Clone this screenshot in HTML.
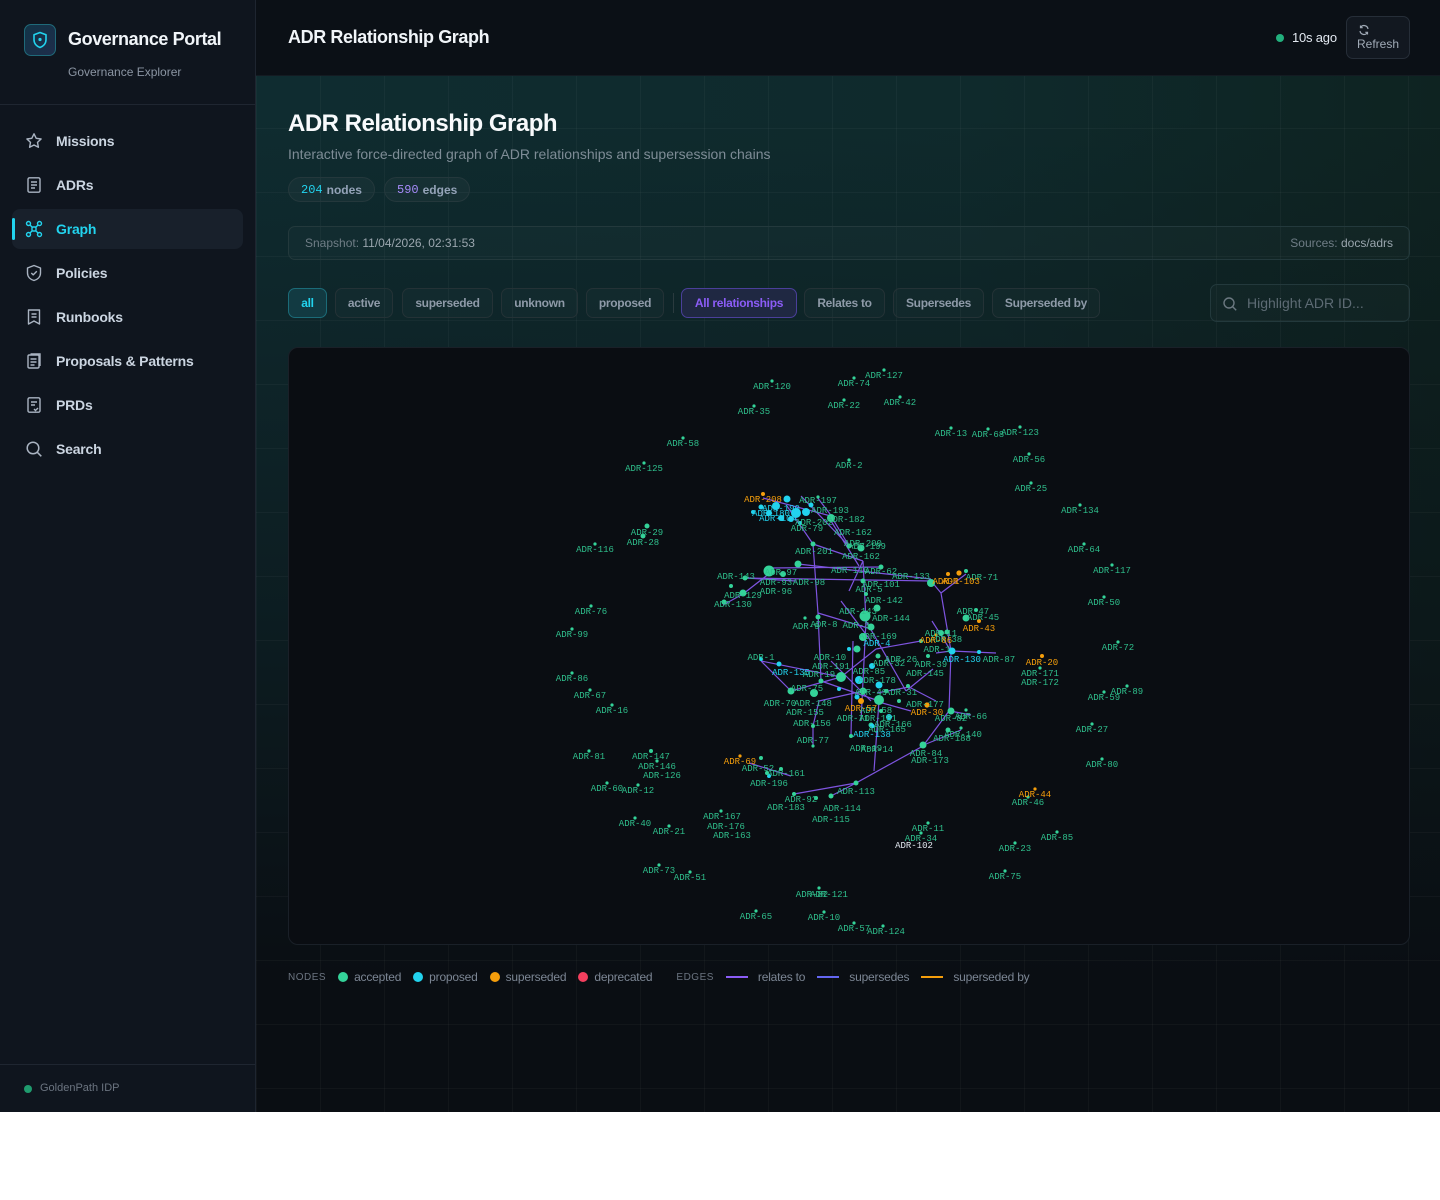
<!DOCTYPE html>
<html><head><meta charset="utf-8">
<style>
*{box-sizing:border-box;margin:0;padding:0}
body{width:1440px;height:1200px;background:#fff;font-family:"Liberation Sans",sans-serif;position:relative;overflow:hidden}
.side{position:absolute;left:0;top:0;width:256px;height:1112px;background:#0f151e;border-right:1px solid #1e2530}
.logo{position:absolute;left:24px;top:24px;width:32px;height:32px;border-radius:7px;border:1px solid #1f6a7a;background:linear-gradient(135deg,#123447,#1e2d4a)}
.brand{position:absolute;left:68px;top:29px;color:#f1f5f9;font-size:18px;font-weight:700;letter-spacing:-0.4px}
.sub{position:absolute;left:68px;top:65px;color:#8b95a3;font-size:12px}
.div1{position:absolute;left:0;top:104px;width:255px;height:1px;background:#1f2631}
.nav{position:absolute;left:12px;width:231px;height:40px;display:flex;align-items:center;padding-left:44px;color:#cbd5e1;font-size:14px;font-weight:700;letter-spacing:-0.2px}
.nav svg{position:absolute;left:13px;top:11px}
.nav.act{background:#18202b;border-radius:8px;color:#22d3ee}
.nav.act:before{content:"";position:absolute;left:0;top:9px;width:3px;height:22px;background:#22d3ee;border-radius:2px}
.foot{position:absolute;left:0;top:1064px;width:255px;height:1px;background:#1f2631}
.main{position:absolute;left:256px;top:0;width:1184px;height:1112px;background:
linear-gradient(180deg,rgba(10,14,19,0) 0%,rgba(10,14,19,0) 10%,rgba(10,14,19,.5) 55%,rgba(10,14,19,1) 88%),
linear-gradient(90deg,#0f2c30 0%,#0f2a2c 60%,#0e2321 100%)}
.grid{position:absolute;inset:0;background-image:linear-gradient(rgba(255,255,255,.03) 1px,transparent 1px),linear-gradient(90deg,rgba(255,255,255,.03) 1px,transparent 1px);background-size:64px 64px;background-position:0 0}
.hdr{position:absolute;left:0;top:0;width:1184px;height:76px;background:#0b1016;border-bottom:1px solid #141b22}
.t1{position:absolute;left:32px;top:27px;color:#f1f5f9;font-size:18px;font-weight:700;letter-spacing:-0.4px}
.pill{position:absolute;top:177px;height:25px;border:1px solid #24383c;border-radius:13px;background:rgba(255,255,255,.03);color:#94a3b8;font-size:12px;font-weight:700;display:flex;align-items:center;padding:0 12px}
.mono{font-family:"Liberation Mono",monospace;font-weight:400}
.btn{position:absolute;top:288px;height:30px;border:1px solid #243236;border-radius:7px;background:rgba(255,255,255,.02);color:#8e9aa8;font-size:12px;font-weight:700;display:flex;align-items:center;justify-content:center;letter-spacing:-0.3px}
.lg{position:absolute;top:970px;font-size:12px;color:#7c8694;display:flex;align-items:center;letter-spacing:-0.2px}
.dot{width:10px;height:10px;border-radius:50%;margin-right:6px}
.ln{width:22px;height:2px;margin-right:10px}
svg text{font-family:"Liberation Mono",monospace;font-size:9px}
</style></head><body>
<div class="side">
 <div class="logo"><svg width="32" height="32" viewBox="0 0 32 32" style="position:absolute;left:-1px;top:-1px"><path d="M16 8.5l6 2.3v5c0 3.8-2.6 6.5-6 7.7-3.4-1.2-6-3.9-6-7.7v-5z" fill="none" stroke="#22d3ee" stroke-width="1.6" stroke-linejoin="round"/><circle cx="16" cy="15.5" r="1.6" fill="#22d3ee"/></svg></div>
 <div class="brand">Governance Portal</div>
 <div class="sub">Governance Explorer</div>
 <div class="div1"></div>
 <div class="nav" style="top:121px"><svg width="18" height="18" viewBox="0 0 18 18" fill="none" stroke="#aab4c2" stroke-width="1.4" stroke-linejoin="round"><path d="M9 1.8l2.2 4.5 4.9.7-3.6 3.4.9 4.9L9 13l-4.4 2.3.9-4.9L1.9 7l4.9-.7z"/></svg>Missions</div>
 <div class="nav" style="top:165px"><svg width="18" height="18" viewBox="0 0 18 18" fill="none" stroke="#aab4c2" stroke-width="1.4"><rect x="3" y="1.8" width="12" height="14.4" rx="1.5"/><path d="M6 6h6M6 9h6M6 12h4"/></svg>ADRs</div>
 <div class="nav act" style="top:209px"><svg width="18" height="18" viewBox="0 0 18 18" fill="none" stroke="#22d3ee" stroke-width="1.4"><circle cx="3.5" cy="3.5" r="2"/><circle cx="14.5" cy="3.5" r="2"/><circle cx="3.5" cy="14.5" r="2"/><circle cx="14.5" cy="14.5" r="2"/><rect x="7" y="7" width="4" height="4" rx="1"/><path d="M5 5l2 2M13 5l-2 2M5 13l2-2M13 13l-2-2"/></svg>Graph</div>
 <div class="nav" style="top:253px"><svg width="18" height="18" viewBox="0 0 18 18" fill="none" stroke="#aab4c2" stroke-width="1.4" stroke-linejoin="round"><path d="M9 1.5l6.5 2.5v5c0 4-3 6.5-6.5 7.5C5.5 15.5 2.5 13 2.5 9V4z"/><path d="M6.3 9l1.9 1.9 3.6-3.6"/></svg>Policies</div>
 <div class="nav" style="top:297px"><svg width="18" height="18" viewBox="0 0 18 18" fill="none" stroke="#aab4c2" stroke-width="1.4" stroke-linejoin="round"><path d="M3.5 2h11v14l-5.5-3-5.5 3z"/><path d="M6.5 6h5M6.5 9h5"/></svg>Runbooks</div>
 <div class="nav" style="top:341px"><svg width="18" height="18" viewBox="0 0 18 18" fill="none" stroke="#aab4c2" stroke-width="1.4"><rect x="3" y="3" width="11" height="13" rx="1.2"/><path d="M5.5 2h9.5v12"/><path d="M5.5 7h6M5.5 10h6M5.5 13h4"/></svg>Proposals &amp; Patterns</div>
 <div class="nav" style="top:385px"><svg width="18" height="18" viewBox="0 0 18 18" fill="none" stroke="#aab4c2" stroke-width="1.4"><rect x="3" y="1.8" width="12" height="14.4" rx="1.5"/><path d="M6 6h6M6 9h4M9 13l1.5 1.5L13 12"/></svg>PRDs</div>
 <div class="nav" style="top:429px"><svg width="18" height="18" viewBox="0 0 18 18" fill="none" stroke="#aab4c2" stroke-width="1.5"><circle cx="8" cy="8" r="5.8"/><path d="M12.3 12.3l4 4"/></svg>Search</div>
 <div class="foot"></div>
 <div style="position:absolute;left:24px;top:1085px;width:8px;height:8px;border-radius:50%;background:#1f9b6e"></div>
 <div style="position:absolute;left:40px;top:1082px;font-size:11px;color:#6b7480">GoldenPath IDP</div>
</div>
<div class="main">
 <div class="grid"></div>
 <div class="hdr">
  <div class="t1">ADR Relationship Graph</div>
  <div style="position:absolute;left:1020px;top:34px;width:8px;height:8px;border-radius:50%;background:#22b07d"></div>
  <div style="position:absolute;left:1036px;top:30px;color:#e2e8f0;font-size:13px;letter-spacing:-0.2px">10s ago</div>
  <div style="position:absolute;left:1090px;top:16px;width:64px;height:43px;border:1px solid #262e38;border-radius:7px;background:#121820;color:#a0aab6;font-size:12px">
   <svg width="12" height="12" viewBox="0 0 12 12" style="position:absolute;left:11px;top:7px" fill="none" stroke="#a0aab6" stroke-width="1.2"><path d="M10 5A4 4 0 0 0 2.6 3.5M2 7a4 4 0 0 0 7.4 1.5"/><path d="M2.5 1.5v2.2h2.2M9.5 10.5V8.3H7.3"/></svg>
   <div style="position:absolute;left:10px;top:20px">Refresh</div></div>
 </div>
 <div style="position:absolute;left:32px;top:110px;color:#f8fafc;font-size:24px;font-weight:700;letter-spacing:-0.5px">ADR Relationship Graph</div>
 <div style="position:absolute;left:32px;top:146px;color:#7e8c96;font-size:14px">Interactive force-directed graph of ADR relationships and supersession chains</div>
 <div class="pill" style="left:32px"><span class="mono" style="color:#22d3ee;margin-right:4px">204</span>nodes</div>
 <div class="pill" style="left:128px"><span class="mono" style="color:#a78bfa;margin-right:4px">590</span>edges</div>
 <div style="position:absolute;left:32px;top:226px;width:1122px;height:34px;border:1px solid #23393c;border-radius:7px;background:rgba(255,255,255,.02);font-size:12px;color:#6f7d86">
  <span style="position:absolute;left:16px;top:9px">Snapshot: <span style="color:#9aa6ae">11/04/2026, 02:31:53</span></span>
  <span style="position:absolute;right:16px;top:9px">Sources: <span style="color:#9aa6ae">docs/adrs</span></span></div>
 <div class="btn" style="left:32px;width:39px;border-color:#1b6b78;background:#123a42;color:#22d3ee">all</div>
 <div class="btn" style="left:79px;width:58px">active</div>
 <div class="btn" style="left:146px;width:91px">superseded</div>
 <div class="btn" style="left:245px;width:77px">unknown</div>
 <div class="btn" style="left:330px;width:78px">proposed</div>
 <div style="position:absolute;left:417px;top:293px;width:1px;height:20px;background:#2a3a3e"></div>
 <div class="btn" style="left:425px;width:116px;border-color:#4a3f9a;background:#1f2842;color:#8b5cf6">All relationships</div>
 <div class="btn" style="left:548px;width:81px">Relates to</div>
 <div class="btn" style="left:637px;width:91px">Supersedes</div>
 <div class="btn" style="left:736px;width:108px">Superseded by</div>
 <div style="position:absolute;left:954px;top:284px;width:200px;height:38px;border:1px solid #23393c;border-radius:7px;background:rgba(255,255,255,.02);color:#5d6b74;font-size:14px">
  <svg width="16" height="16" viewBox="0 0 16 16" style="position:absolute;left:11px;top:11px" fill="none" stroke="#6b7880" stroke-width="1.4"><circle cx="7" cy="7" r="5"/><path d="M10.7 10.7l3.5 3.5"/></svg>
  <span style="position:absolute;left:36px;top:10px">Highlight ADR ID...</span></div>
 <div style="position:absolute;left:32px;top:347px;width:1122px;height:598px;border:1px solid #1a2028;border-radius:10px;background:#0a0d12;overflow:hidden">
<svg width="1122" height="598" viewBox="288 347 1122 598">
<g stroke="#8b5cf6" stroke-width="1.2" fill="none" opacity=".9">
<path d="M762 497L830 515 848 545M786 505L812 543 817 612 820 680M812 543L862 560M744 577L930 580M768 567L880 566M797 563L930 578M930 580L940 592 950 650 948 710 922 745 855 782 793 793M862 560L865 620 860 720M840 676L760 660M820 680L878 700M876 692L908 686M950 650L995 652M908 686L935 700M800 495L848 545M830 520L858 565M790 690L840 676M878 700L873 770M817 612L870 628M862 560L848 590M865 620L905 690M760 660L790 690M816 496L832 517M840 676L875 648M875 648L920 640M935 652L950 650M874 700L910 710M949 710L970 714M920 745L960 729M769 572L742 593M742 593L722 604M795 580L744 577M862 690L818 700M818 700L812 725 812 745M748 762L790 775M855 782L830 795M870 640L840 600M830 660L870 700M905 690L932 668M852 640L850 735M940 592L965 573M931 620L950 650"/>
</g>
<g fill="#34d399">
<circle cx="771" cy="380" r="1.6"/><circle cx="853" cy="377" r="1.6"/><circle cx="883" cy="369" r="1.6"/><circle cx="843" cy="399" r="1.6"/><circle cx="899" cy="396" r="1.6"/><circle cx="753" cy="405" r="1.6"/><circle cx="950" cy="427" r="1.6"/><circle cx="987" cy="428" r="1.6"/><circle cx="1019" cy="426" r="1.6"/><circle cx="682" cy="437" r="1.6"/><circle cx="1028" cy="453" r="1.6"/><circle cx="848" cy="459" r="1.6"/><circle cx="643" cy="462" r="1.6"/><circle cx="1030" cy="482" r="1.6"/><circle cx="1079" cy="504" r="1.6"/><circle cx="646" cy="525" r="2.5"/><circle cx="642" cy="535" r="2.5"/><circle cx="594" cy="543" r="1.6"/><circle cx="1083" cy="543" r="1.6"/><circle cx="1111" cy="564" r="1.6"/><circle cx="1103" cy="596" r="1.6"/><circle cx="590" cy="605" r="1.6"/><circle cx="571" cy="628" r="1.6"/><circle cx="1117" cy="641" r="1.6"/><circle cx="1039" cy="667" r="1.6"/><circle cx="571" cy="672" r="1.6"/><circle cx="1126" cy="685" r="1.6"/><circle cx="1103" cy="691" r="1.6"/><circle cx="589" cy="689" r="1.6"/><circle cx="611" cy="704" r="1.6"/><circle cx="1091" cy="723" r="1.6"/><circle cx="588" cy="750" r="1.6"/><circle cx="650" cy="750" r="2"/><circle cx="656" cy="760" r="1.6"/><circle cx="1101" cy="758" r="1.6"/><circle cx="606" cy="782" r="1.6"/><circle cx="637" cy="784" r="1.6"/><circle cx="1027" cy="796" r="1.6"/><circle cx="634" cy="817" r="1.6"/><circle cx="668" cy="825" r="1.6"/><circle cx="927" cy="822" r="1.6"/><circle cx="1056" cy="831" r="1.6"/><circle cx="920" cy="832" r="1.6"/><circle cx="1014" cy="842" r="1.6"/><circle cx="658" cy="864" r="1.6"/><circle cx="689" cy="871" r="1.6"/><circle cx="1004" cy="870" r="1.6"/><circle cx="818" cy="887" r="1.6"/><circle cx="755" cy="910" r="1.6"/><circle cx="823" cy="911" r="1.6"/><circle cx="853" cy="922" r="1.6"/><circle cx="882" cy="925" r="1.6"/>
<circle cx="812" cy="543" r="2.5"/><circle cx="830" cy="517" r="4"/><circle cx="848" cy="545" r="2.5"/><circle cx="860" cy="547" r="3.5"/><circle cx="768" cy="570" r="5.5"/><circle cx="797" cy="563" r="3.5"/><circle cx="744" cy="577" r="2.5"/><circle cx="782" cy="573" r="3"/><circle cx="742" cy="592" r="3.5"/><circle cx="723" cy="601" r="2.5"/><circle cx="730" cy="585" r="2"/><circle cx="880" cy="566" r="2.5"/><circle cx="930" cy="582" r="4"/><circle cx="965" cy="570" r="2"/><circle cx="862" cy="580" r="2.5"/><circle cx="865" cy="593" r="2"/><circle cx="876" cy="607" r="3.5"/><circle cx="864" cy="615" r="5.5"/><circle cx="870" cy="626" r="3.5"/><circle cx="862" cy="636" r="4"/><circle cx="856" cy="648" r="3.5"/><circle cx="817" cy="616" r="2.5"/><circle cx="804" cy="617" r="1.6"/><circle cx="946" cy="631" r="2.5"/><circle cx="965" cy="617" r="3.5"/><circle cx="975" cy="609" r="2"/><circle cx="940" cy="632" r="3"/><circle cx="927" cy="655" r="2"/><circle cx="920" cy="640" r="2"/><circle cx="877" cy="655" r="2.5"/><circle cx="907" cy="685" r="2"/><circle cx="878" cy="699" r="5"/><circle cx="840" cy="676" r="5"/><circle cx="862" cy="690" r="3.5"/><circle cx="790" cy="690" r="3.5"/><circle cx="813" cy="692" r="4"/><circle cx="820" cy="680" r="2.5"/><circle cx="812" cy="725" r="2"/><circle cx="812" cy="745" r="1.6"/><circle cx="950" cy="710" r="3.5"/><circle cx="965" cy="709" r="1.6"/><circle cx="947" cy="729" r="2.5"/><circle cx="960" cy="727" r="1.6"/><circle cx="922" cy="744" r="3.5"/><circle cx="855" cy="782" r="2.5"/><circle cx="870" cy="724" r="2.5"/><circle cx="793" cy="793" r="2"/><circle cx="830" cy="795" r="2.5"/><circle cx="815" cy="797" r="2"/><circle cx="760" cy="757" r="2"/><circle cx="780" cy="768" r="2"/><circle cx="766" cy="772" r="2"/><circle cx="720" cy="810" r="1.6"/><circle cx="885" cy="690" r="2"/><circle cx="898" cy="700" r="2"/><circle cx="850" cy="735" r="2"/><circle cx="880" cy="710" r="2"/><circle cx="817" cy="496" r="1.6"/>
</g>
<g fill="#22d3ee">
<circle cx="786" cy="498" r="3.5"/><circle cx="775" cy="505" r="4"/><circle cx="795" cy="512" r="5"/><circle cx="805" cy="511" r="4"/><circle cx="768" cy="512" r="3"/><circle cx="810" cy="504" r="2.5"/><circle cx="790" cy="518" r="3"/><circle cx="760" cy="506" r="2.5"/><circle cx="780" cy="517" r="3"/><circle cx="799" cy="522" r="2"/><circle cx="752" cy="511" r="2"/><circle cx="951" cy="650" r="3.5"/><circle cx="978" cy="651" r="2"/><circle cx="878" cy="684" r="3.5"/><circle cx="858" cy="679" r="4"/><circle cx="871" cy="665" r="3"/><circle cx="778" cy="663" r="2.5"/><circle cx="760" cy="658" r="2"/><circle cx="848" cy="648" r="2"/><circle cx="888" cy="716" r="3"/><circle cx="871" cy="725" r="2.5"/><circle cx="856" cy="696" r="2.5"/><circle cx="768" cy="775" r="2"/><circle cx="838" cy="688" r="2"/></g>
<g fill="#f59e0b"><circle cx="762" cy="493" r="2"/><circle cx="1041" cy="655" r="2"/><circle cx="1034" cy="788" r="1.6"/><circle cx="947" cy="573" r="2"/><circle cx="958" cy="572" r="2.6"/><circle cx="978" cy="620" r="2"/><circle cx="935" cy="634" r="1.6"/><circle cx="860" cy="700" r="3"/><circle cx="926" cy="704" r="2.6"/><circle cx="739" cy="755" r="1.6"/></g>
<g fill="#2fbf8c" text-anchor="middle">
<text x="771" y="388">ADR-120</text><text x="853" y="385">ADR-74</text><text x="883" y="377">ADR-127</text><text x="843" y="407">ADR-22</text><text x="899" y="404">ADR-42</text><text x="753" y="413">ADR-35</text><text x="950" y="435">ADR-13</text><text x="987" y="436">ADR-68</text><text x="1019" y="434">ADR-123</text><text x="682" y="445">ADR-58</text><text x="1028" y="461">ADR-56</text><text x="848" y="467">ADR-2</text><text x="643" y="470">ADR-125</text><text x="1030" y="490">ADR-25</text><text x="1079" y="512">ADR-134</text><text x="646" y="534">ADR-29</text><text x="642" y="544">ADR-28</text><text x="594" y="551">ADR-116</text><text x="1083" y="551">ADR-64</text><text x="1111" y="572">ADR-117</text><text x="1103" y="604">ADR-50</text><text x="590" y="613">ADR-76</text><text x="571" y="636">ADR-99</text><text x="1117" y="649">ADR-72</text><text x="1039" y="675">ADR-171</text><text x="1039" y="684">ADR-172</text><text x="571" y="680">ADR-86</text><text x="1126" y="693">ADR-89</text><text x="1103" y="699">ADR-59</text><text x="589" y="697">ADR-67</text><text x="611" y="712">ADR-16</text><text x="1091" y="731">ADR-27</text><text x="588" y="758">ADR-81</text><text x="650" y="758">ADR-147</text><text x="656" y="768">ADR-146</text><text x="661" y="777">ADR-126</text><text x="1101" y="766">ADR-80</text><text x="606" y="790">ADR-60</text><text x="637" y="792">ADR-12</text><text x="1027" y="804">ADR-46</text><text x="634" y="825">ADR-40</text><text x="668" y="833">ADR-21</text><text x="927" y="830">ADR-11</text><text x="1056" y="839">ADR-85</text><text x="920" y="840">ADR-34</text><text x="1014" y="850">ADR-23</text><text x="658" y="872">ADR-73</text><text x="689" y="879">ADR-51</text><text x="1004" y="878">ADR-75</text><text x="811" y="896">ADR-82</text><text x="828" y="896">ADR-121</text><text x="755" y="918">ADR-65</text><text x="823" y="919">ADR-10</text><text x="853" y="930">ADR-57</text><text x="885" y="933">ADR-124</text>
<text x="817" y="502">ADR-197</text><text x="829" y="512">ADR-193</text><text x="845" y="521">ADR-182</text><text x="806" y="530">ADR-79</text><text x="813" y="524">ADR-202</text><text x="852" y="534">ADR-162</text><text x="866" y="548">ADR-199</text><text x="862" y="545">ADR-200</text><text x="813" y="553">ADR-201</text><text x="860" y="558">ADR-162</text><text x="849" y="572">ADR-110</text><text x="880" y="573">ADR-62</text><text x="910" y="578">ADR-133</text><text x="981" y="579">ADR-71</text><text x="780" y="574">ADR-97</text><text x="808" y="584">ADR-98</text><text x="775" y="593">ADR-96</text><text x="775" y="584">ADR-93</text><text x="742" y="597">ADR-129</text><text x="732" y="606">ADR-130</text><text x="735" y="578">ADR-143</text><text x="880" y="586">ADR-101</text><text x="868" y="591">ADR-5</text><text x="883" y="602">ADR-142</text><text x="890" y="620">ADR-144</text><text x="857" y="613">ADR-143</text><text x="805" y="628">ADR-9</text><text x="823" y="626">ADR-8</text><text x="855" y="627">ADR-3</text><text x="877" y="638">ADR-169</text><text x="945" y="641">ADR-38</text><text x="982" y="619">ADR-45</text><text x="972" y="613">ADR-47</text><text x="940" y="635">ADR-11</text><text x="900" y="661">ADR-26</text><text x="888" y="665">ADR-32</text><text x="924" y="675">ADR-145</text><text x="930" y="666">ADR-39</text><text x="998" y="661">ADR-87</text><text x="868" y="673">ADR-85</text><text x="876" y="682">ADR-178</text><text x="829" y="659">ADR-10</text><text x="760" y="659">ADR-1</text><text x="818" y="676">ADR-19</text><text x="812" y="705">ADR-148</text><text x="779" y="705">ADR-70</text><text x="804" y="714">ADR-155</text><text x="811" y="725">ADR-156</text><text x="812" y="742">ADR-77</text><text x="924" y="706">ADR-177</text><text x="970" y="718">ADR-66</text><text x="950" y="720">ADR-82</text><text x="962" y="736">ADR-140</text><text x="951" y="740">ADR-188</text><text x="886" y="731">ADR-165</text><text x="892" y="726">ADR-166</text><text x="876" y="751">ADR-14</text><text x="865" y="750">ADR-19</text><text x="925" y="755">ADR-84</text><text x="929" y="762">ADR-173</text><text x="785" y="775">ADR-161</text><text x="757" y="770">ADR-52</text><text x="768" y="785">ADR-196</text><text x="855" y="793">ADR-113</text><text x="841" y="810">ADR-114</text><text x="785" y="809">ADR-183</text><text x="800" y="801">ADR-92</text><text x="830" y="821">ADR-115</text><text x="721" y="818">ADR-167</text><text x="725" y="828">ADR-176</text><text x="731" y="837">ADR-163</text><text x="852" y="720">ADR-71</text><text x="875" y="712">ADR-58</text><text x="870" y="694">ADR-49</text><text x="806" y="690">ADR-75</text><text x="830" y="668">ADR-191</text><text x="936" y="651">ADR-1</text><text x="877" y="720">ADR-181</text><text x="900" y="694">ADR-31</text></g>
<g fill="#22d3ee" text-anchor="middle"><text x="780" y="510">ADR-190</text><text x="777" y="520">ADR-104</text><text x="770" y="515">ADR-180</text><text x="961" y="661">ADR-130</text><text x="871" y="736">ADR-138</text><text x="790" y="674">ADR-135</text><text x="876" y="645">ADR-4</text></g>
<g fill="#f59e0b" text-anchor="middle"><text x="762" y="501">ADR-208</text><text x="1041" y="664">ADR-20</text><text x="1034" y="796">ADR-44</text><text x="960" y="583">ADR-103</text><text x="945" y="583">ADR-1</text><text x="978" y="630">ADR-43</text><text x="935" y="642">ADR-86</text><text x="860" y="710">ADR-57</text><text x="926" y="714">ADR-30</text><text x="739" y="763">ADR-69</text></g>
<text x="913" y="847" fill="#e2e8f0" text-anchor="middle">ADR-102</text>
</svg>
 </div>
 <div class="lg" style="left:32px"><span style="font-size:10px;letter-spacing:.5px;margin-right:12px;color:#6b7480">NODES</span>
 <span class="dot" style="background:#34d399"></span><span style="margin-right:12px">accepted</span>
 <span class="dot" style="background:#22d3ee"></span><span style="margin-right:12px">proposed</span>
 <span class="dot" style="background:#f59e0b"></span><span style="margin-right:12px">superseded</span>
 <span class="dot" style="background:#f43f5e"></span><span style="margin-right:24px">deprecated</span>
 <span style="font-size:10px;letter-spacing:.5px;margin-right:12px;color:#6b7480">EDGES</span>
 <span class="ln" style="background:#8b5cf6"></span><span style="margin-right:12px">relates to</span>
 <span class="ln" style="background:#6366f1"></span><span style="margin-right:12px">supersedes</span>
 <span class="ln" style="background:#f59e0b"></span><span>superseded by</span></div>
</div>
</body></html>
